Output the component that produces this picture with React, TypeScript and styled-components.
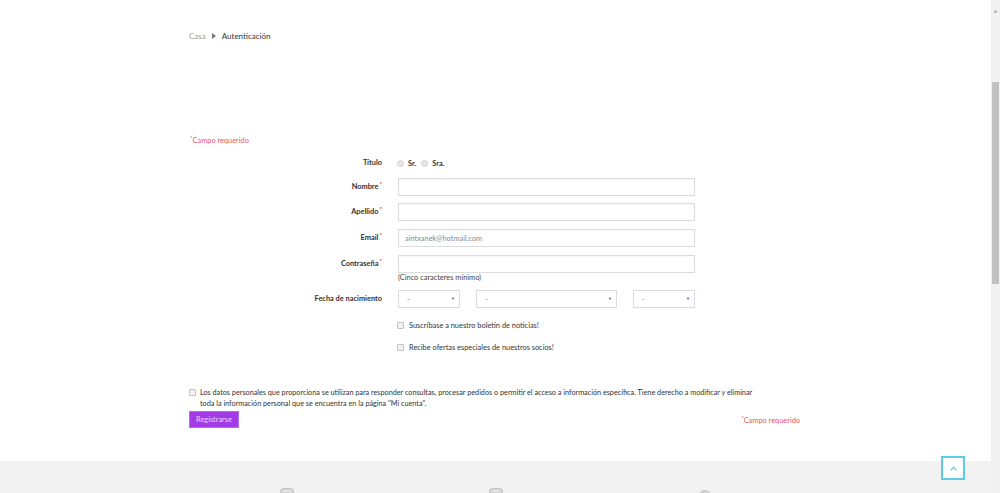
import React from 'react'
import styled, { createGlobalStyle } from 'styled-components'

const GlobalStyle = createGlobalStyle`
  html {
    overflow: hidden;
  }
  body {
    margin: 0;
    font-family: 'Lato', 'Open Sans', sans-serif;
    color: #333;
    background: #fff;
  }
`

export default function App() {
  return (
    <>
      <GlobalStyle />
      <Page>
        <Container>
          <Breadcrumb>
            <Crumb>Casa</Crumb>
            <svg width="4" height="6" viewBox="0 0 4 6">
              <path d="M0 0 L4 3 L0 6 Z" fill="#7a7a7a" />
            </svg>
            <Crumb $current>Autenticación</Crumb>
          </Breadcrumb>

          <RequiredNote $mt={93}>
            <Star>*</Star>Campo requerido
          </RequiredNote>

          <Row $mt={7}>
            <Label>Título</Label>
            <Inline>
              <Radio />
              <OptionText>Sr.</OptionText>
              <Radio $ml={1} />
              <OptionText>Sra.</OptionText>
            </Inline>
          </Row>

          <Row $mt={6}>
            <Label>
              Nombre<Star>*</Star>
            </Label>
            <Field>
              <TextInput type="text" />
            </Field>
          </Row>

          <Row $mt={7}>
            <Label>
              Apellido<Star>*</Star>
            </Label>
            <Field>
              <TextInput type="text" />
            </Field>
          </Row>

          <Row $mt={8}>
            <Label>
              Email<Star>*</Star>
            </Label>
            <Field>
              <TextInput type="text" defaultValue="aintxanek@hotmail.com" />
            </Field>
          </Row>

          <Row $mt={8}>
            <Label>
              Contraseña<Star>*</Star>
            </Label>
            <Field>
              <TextInput type="password" />
              <Hint>(Cinco caracteres mínimo)</Hint>
            </Field>
          </Row>

          <Row $mt={8}>
            <Label>Fecha de nacimiento</Label>
            <Selects>
              <SelectBox $w={62}>
                <Select defaultValue="-">
                  <option>-</option>
                </Select>
              </SelectBox>
              <SelectBox $w={141}>
                <Select defaultValue="-">
                  <option>-</option>
                </Select>
              </SelectBox>
              <SelectBox $w={62}>
                <Select defaultValue="-">
                  <option>-</option>
                </Select>
              </SelectBox>
            </Selects>
          </Row>

          <Row $mt={11}>
            <Spacer />
            <CheckLine>
              <Checkbox />
              <span>Suscríbase a nuestro boletín de noticias!</span>
            </CheckLine>
          </Row>

          <Row $mt={10}>
            <Spacer />
            <CheckLine>
              <Checkbox />
              <span>Recibe ofertas especiales de nuestros socios!</span>
            </CheckLine>
          </Row>

          <Privacy>
            <Checkbox $top={2} />
            <p>
              Los datos personales que proporciona se utilizan para responder consultas, procesar pedidos o permitir el acceso a información específica. Tiene derecho a modificar y eliminar
              <br />
              toda la información personal que se encuentra en la página "Mi cuenta".
            </p>
          </Privacy>

          <Actions>
            <Button type="button">Registrarse</Button>
            <RequiredNote $mt={3}>
              <Star>*</Star>Campo requerido
            </RequiredNote>
          </Actions>
        </Container>

        <Footer>
          <FooterCols>
            <FooterCol>
              <svg width="14" height="14" viewBox="0 0 14 14">
                <rect x="0.5" y="0.5" width="13" height="13" rx="3" fill="#d2d2d2" stroke="#c4c4c4" />
                <rect x="2.5" y="2" width="9" height="2" rx="1" fill="#e4e4e4" />
              </svg>
            </FooterCol>
            <FooterCol>
              <svg width="14" height="14" viewBox="0 0 14 14">
                <rect x="0.5" y="0.5" width="13" height="13" rx="3" fill="#d2d2d2" stroke="#c4c4c4" />
                <rect x="2.5" y="2" width="9" height="2" rx="1" fill="#e4e4e4" />
              </svg>
            </FooterCol>
            <FooterCol>
              <svg width="14" height="16" viewBox="0 0 14 16">
                <circle cx="7" cy="9" r="6.5" fill="#d2d2d2" stroke="#c4c4c4" />
              </svg>
            </FooterCol>
          </FooterCols>
        </Footer>
      </Page>

      <ScrollTop type="button" aria-label="Subir">
        <svg width="7" height="5" viewBox="0 0 7 5">
          <path d="M0.8 4.2 L3.5 1.2 L6.2 4.2" fill="none" stroke="#6fd0e6" strokeWidth="1.4" />
        </svg>
      </ScrollTop>

      <ScrollTrack>
        <svg width="9" height="10" viewBox="0 0 9 10">
          <path d="M2.5 6.5 L4.5 4 L6.5 6.5 Z" fill="#a3a3a3" />
        </svg>
        <ScrollThumb />
      </ScrollTrack>
    </>
  )
}

const Page = styled.div`
  width: 991px;
`

const Container = styled.div`
  width: 613px;
  margin: 0 auto;
  padding-bottom: 33px;
  font-size: 7.4px;
`

const Breadcrumb = styled.nav`
  display: flex;
  align-items: center;
  gap: 6px;
  padding-top: 30px;
  height: 12px;
  line-height: 12px;
  font-size: 8px;
`

const Crumb = styled.span<{ $current?: boolean }>`
  color: ${p => (p.$current ? '#333' : '#a0a0a0')};
`

const RequiredNote = styled.p<{ $mt: number }>`
  margin: ${p => p.$mt}px 0 0;
  color: #f3525c;
  font-size: 7.4px;
  line-height: 12px;
`

const Star = styled.span`
  color: #f01d1d;
  font-size: 6px;
  position: relative;
  top: -3px;
  margin-left: 1px;
`

const Row = styled.div<{ $mt: number }>`
  display: flex;
  align-items: flex-start;
  margin-top: ${p => p.$mt}px;
`

const Label = styled.label`
  flex-shrink: 0;
  width: 193px;
  margin-right: 16px;
  text-align: right;
  font-weight: 700;
  line-height: 18px;
  color: #333;
`

const Spacer = styled.div`
  flex-shrink: 0;
  width: 209px;
`

const Field = styled.div`
  width: 297px;
`

const TextInput = styled.input`
  display: block;
  box-sizing: border-box;
  width: 100%;
  height: 18px;
  margin: 0;
  padding: 0 6px;
  border: 1px solid #dcdcdc;
  box-shadow: inset 0 1px 1px rgba(0, 0, 0, 0.03);
  background: #fff;
  font-family: 'Lato', sans-serif;
  font-size: 7.4px;
  color: #8a8a8a;
  outline: none;
`

const Hint = styled.div`
  line-height: 9px;
  color: #444;
`

const Inline = styled.div`
  display: flex;
  align-items: center;
  height: 18px;
  margin-left: -1px;
`

const Radio = styled.span<{ $ml?: number }>`
  box-sizing: border-box;
  width: 7px;
  height: 7px;
  margin-left: ${p => p.$ml ?? 0}px;
  border: 1px solid #d6d6d6;
  border-radius: 50%;
  background: #e6e6e6;
`

const OptionText = styled.span`
  margin: 0 4px;
  font-weight: 700;
  color: #333;
`

const Selects = styled.div`
  display: flex;
  gap: 16px;
  width: 297px;
`

const SelectBox = styled.div<{ $w: number }>`
  position: relative;
  width: ${p => p.$w}px;
  height: 18px;

  &::after {
    content: '▼';
    position: absolute;
    right: 5px;
    top: 6px;
    font-size: 4px;
    line-height: 5px;
    color: #555;
    pointer-events: none;
  }
`

const Select = styled.select`
  box-sizing: border-box;
  width: 100%;
  height: 100%;
  margin: 0;
  padding: 0 0 0 8px;
  border: 1px solid #dcdcdc;
  border-radius: 0;
  background: #fff;
  appearance: none;
  font-family: 'Lato', sans-serif;
  font-size: 7.4px;
  color: #888;
  outline: none;
`

const CheckLine = styled.div`
  display: flex;
  align-items: center;
  gap: 5px;
  height: 12px;
  margin-left: -1px;
  color: #333;
`

const Checkbox = styled.span<{ $top?: number }>`
  flex-shrink: 0;
  box-sizing: border-box;
  width: 7px;
  height: 7px;
  margin-top: ${p => p.$top ?? 0}px;
  border: 1px solid #c2c2c2;
  border-radius: 1px;
  background: #f2f2f2;
`

const Privacy = styled.div`
  display: flex;
  align-items: flex-start;
  gap: 4px;
  margin-top: 34px;

  p {
    margin: 0;
    font-size: 7.25px;
    line-height: 11px;
    color: #333;
    white-space: nowrap;
  }
`

const Actions = styled.div`
  display: flex;
  justify-content: space-between;
  align-items: center;
  margin-top: 2px;
  padding-right: 2px;
`

const Button = styled.button`
  height: 17px;
  padding: 0 6px;
  border: 1px solid #b46cef;
  background: #a33be6;
  color: #e8d6f8;
  font-family: 'Lato', sans-serif;
  font-size: 7.4px;
  cursor: pointer;
`

const Footer = styled.footer`
  min-height: 666px;
  padding-top: 27px;
  background: #f2f2f2;
`

const FooterCols = styled.div`
  display: grid;
  grid-template-columns: repeat(3, 1fr);
  width: 627px;
  margin: 0 auto;
`

const FooterCol = styled.div`
  display: flex;
  justify-content: center;
`

const ScrollTop = styled.button`
  position: fixed;
  right: 35px;
  bottom: 13px;
  display: flex;
  align-items: center;
  justify-content: center;
  box-sizing: border-box;
  width: 24px;
  height: 24px;
  padding: 0;
  border: 2px solid #5ccbe3;
  background: #fff;
  cursor: pointer;
`

const ScrollTrack = styled.div`
  position: fixed;
  top: 0;
  right: 0;
  bottom: 0;
  width: 9px;
  background: #f1f1f1;
`

const ScrollThumb = styled.div`
  width: 7px;
  height: 202px;
  margin: 63px auto 0;
  background: #c1c1c1;
`
